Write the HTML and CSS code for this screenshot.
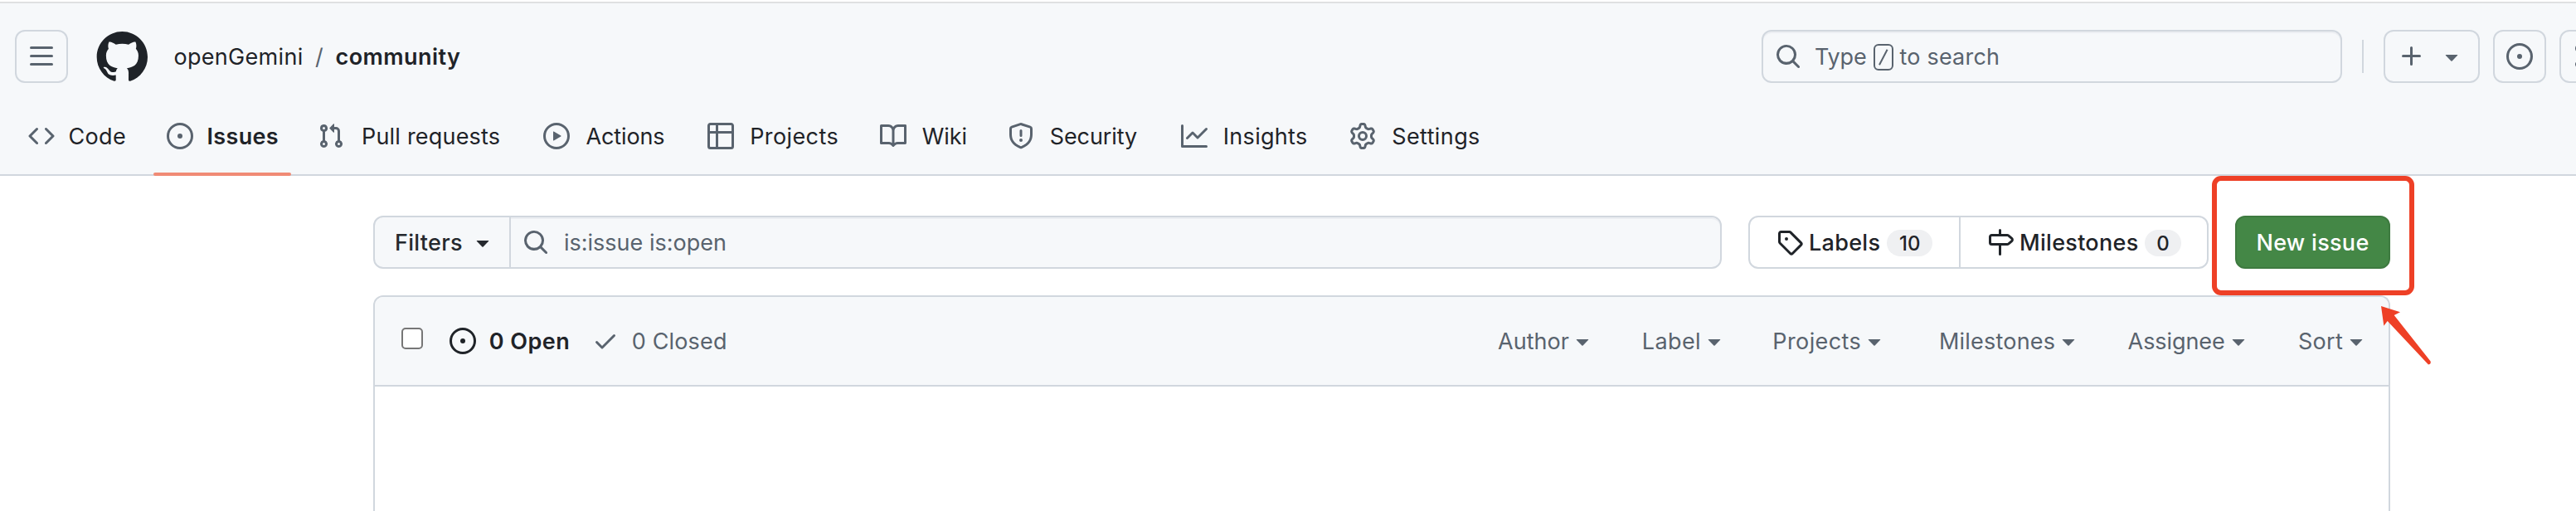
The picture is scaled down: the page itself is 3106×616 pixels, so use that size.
FILE: index.html
```html
<!DOCTYPE html>
<html lang="en">
<head>
<meta charset="utf-8">
<title>Issues · openGemini/community</title>
<link rel="stylesheet" href="styles.css">
</head>
<body>
<svg class="sprite" aria-hidden="true">
  <symbol id="bars" viewBox="0 0 16 16"><path d="M1 2.75A.75.75 0 0 1 1.75 2h12.5a.75.75 0 0 1 0 1.5H1.75A.75.75 0 0 1 1 2.75Zm0 5A.75.75 0 0 1 1.75 7h12.5a.75.75 0 0 1 0 1.5H1.75A.75.75 0 0 1 1 7.75ZM1.75 12h12.5a.75.75 0 0 1 0 1.5H1.75a.75.75 0 0 1 0-1.5Z"/></symbol>
  <symbol id="mark" viewBox="0 0 24 24"><path d="M12.5.75C6.146.75 1 5.896 1 12.25c0 5.089 3.292 9.387 7.863 10.91.575.101.79-.244.79-.546 0-.273-.014-1.178-.014-2.142-2.889.532-3.636-.704-3.866-1.35-.13-.331-.69-1.352-1.18-1.625-.402-.216-.977-.748-.014-.762.906-.014 1.553.834 1.769 1.179 1.035 1.74 2.688 1.25 3.349.948.1-.747.402-1.25.733-1.538-2.559-.287-5.232-1.279-5.232-5.678 0-1.25.445-2.285 1.178-3.09-.115-.288-.517-1.467.115-3.048 0 0 .963-.302 3.163 1.179.92-.259 1.897-.388 2.875-.388.977 0 1.955.13 2.875.388 2.2-1.495 3.162-1.179 3.162-1.179.633 1.581.23 2.76.115 3.048.733.805 1.179 1.825 1.179 3.09 0 4.413-2.688 5.39-5.247 5.678.417.36.776 1.05.776 2.128 0 1.538-.014 2.774-.014 3.162 0 .302.216.662.79.547C20.709 21.637 24 17.324 24 12.25 24 5.896 18.854.75 12.5.75Z"/></symbol>
  <symbol id="code" viewBox="0 0 16 16"><path d="m11.28 3.22 4.25 4.25a.75.75 0 0 1 0 1.06l-4.25 4.25a.749.749 0 0 1-1.275-.326.749.749 0 0 1 .215-.734L13.94 8l-3.72-3.72a.749.749 0 0 1 .326-1.275.749.749 0 0 1 .734.215Zm-6.56 0a.751.751 0 0 1 1.042.018.751.751 0 0 1 .018 1.042L2.06 8l3.72 3.72a.749.749 0 0 1-.326 1.275.749.749 0 0 1-.734-.215L.47 8.53a.75.75 0 0 1 0-1.06Z"/></symbol>
  <symbol id="issue" viewBox="0 0 16 16"><path d="M8 9.5a1.5 1.5 0 1 0 0-3 1.5 1.5 0 0 0 0 3Z"/><path d="M8 0a8 8 0 1 1 0 16A8 8 0 0 1 8 0ZM1.5 8a6.5 6.5 0 1 0 13 0 6.5 6.5 0 0 0-13 0Z"/></symbol>
  <symbol id="pull" viewBox="0 0 16 16"><path d="M1.5 3.25a2.25 2.25 0 1 1 3 2.122v5.256a2.251 2.251 0 1 1-1.5 0V5.372A2.25 2.25 0 0 1 1.5 3.25Zm5.677-.177L9.573.677A.25.25 0 0 1 10 .854V2.5h1A2.5 2.5 0 0 1 13.5 5v5.628a2.251 2.251 0 1 1-1.5 0V5a1 1 0 0 0-1-1h-1v1.646a.25.25 0 0 1-.427.177L7.177 3.427a.25.25 0 0 1 0-.354ZM3.75 2.5a.75.75 0 1 0 0 1.5.75.75 0 0 0 0-1.5Zm0 9.5a.75.75 0 1 0 0 1.5.75.75 0 0 0 0-1.5Zm8.25.75a.75.75 0 1 0 1.5 0 .75.75 0 0 0-1.5 0Z"/></symbol>
  <symbol id="play" viewBox="0 0 16 16"><path d="M8 0a8 8 0 1 1 0 16A8 8 0 0 1 8 0ZM1.5 8a6.5 6.5 0 1 0 13 0 6.5 6.5 0 0 0-13 0Zm4.879-2.773 4.264 2.559a.25.25 0 0 1 0 .428l-4.264 2.559A.25.25 0 0 1 6 10.559V5.442a.25.25 0 0 1 .379-.215Z"/></symbol>
  <symbol id="table" viewBox="0 0 16 16"><path d="M0 1.75C0 .784.784 0 1.75 0h12.5C15.216 0 16 .784 16 1.75v12.5A1.75 1.75 0 0 1 14.25 16H1.75A1.75 1.75 0 0 1 0 14.25ZM6.5 6.5v8h7.75a.25.25 0 0 0 .25-.25V6.5Zm8-1.5V1.75a.25.25 0 0 0-.25-.25H6.5V5Zm-13 1.5v7.75c0 .138.112.25.25.25H5v-8ZM5 5V1.5H1.75a.25.25 0 0 0-.25.25V5Z"/></symbol>
  <symbol id="book" viewBox="0 0 16 16"><path d="M0 1.75A.75.75 0 0 1 .75 1h4.253c1.227 0 2.317.59 3 1.501A3.743 3.743 0 0 1 11.006 1h4.245a.75.75 0 0 1 .75.75v10.5a.75.75 0 0 1-.75.75h-4.507a2.25 2.25 0 0 0-1.591.659l-.622.621a.75.75 0 0 1-1.06 0l-.622-.621A2.25 2.25 0 0 0 5.258 13H.75a.75.75 0 0 1-.75-.75Zm7.251 10.324.004-5.073-.002-2.253A2.25 2.25 0 0 0 5.003 2.5H1.5v9h3.757a3.75 3.75 0 0 1 1.994.574ZM8.755 4.75l-.004 7.322a3.752 3.752 0 0 1 1.992-.572H14.5v-9h-3.495a2.25 2.25 0 0 0-2.25 2.25Z"/></symbol>
  <symbol id="shield" viewBox="0 0 16 16"><path d="M7.467.133a1.748 1.748 0 0 1 1.066 0l5.25 1.68A1.75 1.75 0 0 1 15 3.48V7c0 1.566-.32 3.182-1.303 4.682-.983 1.498-2.585 2.813-5.032 3.855a1.697 1.697 0 0 1-1.33 0c-2.447-1.042-4.049-2.357-5.032-3.855C1.32 10.182 1 8.566 1 7V3.48a1.75 1.75 0 0 1 1.217-1.667Zm.61 1.429a.25.25 0 0 0-.153 0l-5.25 1.68a.25.25 0 0 0-.174.238V7c0 1.358.275 2.666 1.057 3.86.784 1.194 2.121 2.34 4.366 3.297a.196.196 0 0 0 .154 0c2.245-.956 3.582-2.104 4.366-3.298C13.225 9.666 13.5 8.36 13.5 7V3.48a.251.251 0 0 0-.174-.237l-5.25-1.68ZM8.75 4.75v3a.75.75 0 0 1-1.5 0v-3a.75.75 0 0 1 1.5 0ZM9 10.5a1 1 0 1 1-2 0 1 1 0 0 1 2 0Z"/></symbol>
  <symbol id="graph" viewBox="0 0 16 16"><path d="M1.5 1.75V13.5h13.75a.75.75 0 0 1 0 1.5H.75a.75.75 0 0 1-.75-.75V1.75a.75.75 0 0 1 1.5 0Zm14.28 2.53-5.25 5.25a.75.75 0 0 1-1.06 0L7 7.06 4.28 9.78a.751.751 0 0 1-1.042-.018.751.751 0 0 1-.018-1.042l3.25-3.25a.75.75 0 0 1 1.06 0L10 7.94l4.72-4.72a.751.751 0 0 1 1.042.018.751.751 0 0 1 .018 1.042Z"/></symbol>
  <symbol id="gear" viewBox="0 0 16 16"><path d="M8 0a8.2 8.2 0 0 1 .701.031C9.444.095 9.99.645 10.16 1.29l.288 1.107c.018.066.079.158.212.224.231.114.454.243.668.386.123.082.233.09.299.071l1.103-.303c.644-.176 1.392.021 1.82.63.27.385.506.792.704 1.218.315.675.111 1.422-.364 1.891l-.814.806c-.049.048-.098.147-.088.294.016.257.016.515 0 .772-.01.147.038.246.088.294l.814.806c.475.469.679 1.216.364 1.891a7.977 7.977 0 0 1-.704 1.217c-.428.61-1.176.807-1.82.63l-1.102-.302c-.067-.019-.177-.011-.3.071a5.909 5.909 0 0 1-.668.386c-.133.066-.194.158-.211.224l-.29 1.106c-.168.646-.715 1.196-1.458 1.26a8.006 8.006 0 0 1-1.402 0c-.743-.064-1.289-.614-1.458-1.26l-.289-1.106c-.018-.066-.079-.158-.212-.224a5.738 5.738 0 0 1-.668-.386c-.123-.082-.233-.09-.299-.071l-1.103.303c-.644.176-1.392-.021-1.82-.63a8.12 8.12 0 0 1-.704-1.218c-.315-.675-.111-1.422.363-1.891l.815-.806c.05-.048.098-.147.088-.294a6.214 6.214 0 0 1 0-.772c.01-.147-.038-.246-.088-.294l-.815-.806C.635 6.045.431 5.298.746 4.623a7.92 7.92 0 0 1 .704-1.217c.428-.61 1.176-.807 1.82-.63l1.102.302c.067.019.177.011.3-.071.214-.143.437-.272.668-.386.133-.066.194-.158.211-.224l.29-1.106C6.009.645 6.556.095 7.299.03 7.53.01 7.764 0 8 0Zm-.571 1.525c-.036.003-.108.036-.137.146l-.289 1.105c-.147.561-.549.967-.998 1.189-.173.086-.34.183-.5.29-.417.278-.97.423-1.529.27l-1.103-.303c-.109-.03-.175.016-.195.045-.22.312-.412.644-.573.99-.014.031-.021.11.059.19l.815.806c.411.406.562.957.53 1.456a4.709 4.709 0 0 0 0 .582c.032.499-.119 1.05-.53 1.456l-.815.806c-.081.08-.073.159-.059.19.162.346.353.677.573.989.02.03.085.076.195.046l1.102-.303c.56-.153 1.113-.008 1.53.27.161.107.328.204.501.29.447.222.85.629.997 1.189l.289 1.105c.029.109.101.143.137.146a6.6 6.6 0 0 0 1.142 0c.036-.003.108-.036.137-.146l.289-1.105c.147-.561.549-.967.998-1.189.173-.086.34-.183.5-.29.417-.278.97-.423 1.529-.27l1.103.303c.109.029.175-.016.195-.045.22-.313.411-.644.573-.99.014-.031.021-.11-.059-.19l-.815-.806c-.411-.406-.562-.957-.53-1.456a4.709 4.709 0 0 0 0-.582c-.032-.499.119-1.05.53-1.456l.815-.806c.081-.08.073-.159.059-.19a6.464 6.464 0 0 0-.573-.989c-.02-.03-.085-.076-.195-.046l-1.102.303c-.56.153-1.113.008-1.53-.27a4.44 4.44 0 0 0-.501-.29c-.447-.222-.85-.629-.997-1.189l-.289-1.105c-.029-.11-.101-.143-.137-.146a6.6 6.6 0 0 0-1.142 0ZM11 8a3 3 0 1 1-6 0 3 3 0 0 1 6 0ZM9.5 8a1.5 1.5 0 1 0-3.001.001A1.5 1.5 0 0 0 9.5 8Z"/></symbol>
  <symbol id="search" viewBox="0 0 16 16"><path d="M10.68 11.74a6 6 0 0 1-7.922-8.982 6 6 0 0 1 8.982 7.922l3.04 3.04a.749.749 0 0 1-.326 1.275.749.749 0 0 1-.734-.215ZM11.5 7a4.499 4.499 0 1 0-8.997 0A4.499 4.499 0 0 0 11.5 7Z"/></symbol>
  <symbol id="plus" viewBox="0 0 16 16"><path d="M7.75 2a.75.75 0 0 1 .75.75V7h4.25a.75.75 0 0 1 0 1.5H8.5v4.25a.75.75 0 0 1-1.5 0V8.5H2.75a.75.75 0 0 1 0-1.5H7V2.75A.75.75 0 0 1 7.75 2Z"/></symbol>
  <symbol id="caret" viewBox="0 0 16 16"><path d="m4.427 7.427 3.396 3.396a.25.25 0 0 0 .354 0l3.396-3.396A.25.25 0 0 0 11.396 7H4.604a.25.25 0 0 0-.177.427Z"/></symbol>
  <symbol id="tag" viewBox="0 0 16 16"><path d="M1 7.775V2.75C1 1.784 1.784 1 2.75 1h5.025c.464 0 .91.184 1.238.513l6.25 6.25a1.75 1.75 0 0 1 0 2.474l-5.026 5.026a1.75 1.75 0 0 1-2.474 0l-6.25-6.25A1.752 1.752 0 0 1 1 7.775Zm1.5 0c0 .066.026.13.073.177l6.25 6.25a.25.25 0 0 0 .354 0l5.025-5.025a.25.25 0 0 0 0-.354l-6.25-6.25a.25.25 0 0 0-.177-.073H2.75a.25.25 0 0 0-.25.25ZM6 5a1 1 0 1 1 0 2 1 1 0 0 1 0-2Z"/></symbol>
  <symbol id="milestone" viewBox="0 0 16 16"><path d="M7.75 0a.75.75 0 0 1 .75.75V3h3.634c.414 0 .814.147 1.13.414l2.07 1.75a1.75 1.75 0 0 1 0 2.672l-2.07 1.75a1.75 1.75 0 0 1-1.13.414H8.5v5.25a.75.75 0 0 1-1.5 0V10H2.75A1.75 1.75 0 0 1 1 8.25v-3.5C1 3.784 1.784 3 2.75 3H7V.75A.75.75 0 0 1 7.75 0Zm4.384 8.5a.25.25 0 0 0 .161-.06l2.07-1.75a.248.248 0 0 0 0-.38l-2.07-1.75a.25.25 0 0 0-.161-.06H2.75a.25.25 0 0 0-.25.25v3.5c0 .138.112.25.25.25h9.384Z"/></symbol>
  <symbol id="check" viewBox="0 0 16 16"><path d="M13.78 4.22a.75.75 0 0 1 0 1.06l-7.25 7.25a.75.75 0 0 1-1.06 0L2.22 9.28a.751.751 0 0 1 .018-1.042.751.751 0 0 1 1.042-.018L6 10.94l6.72-6.72a.75.75 0 0 1 1.06 0Z"/></symbol>
</svg>

<header class="header">
  <div class="topbar">
    <button class="box-btn menu-btn" aria-label="Menu"><svg class="icon"><use href="#bars"/></svg></button>
    <svg class="logo"><use href="#mark"/></svg>
    <div class="crumbs"><a class="owner">openGemini</a><span class="slash">/</span><a class="repo">community</a></div>
    <div class="search">
      <svg class="icon"><use href="#search"/></svg>
      <span class="type">Type</span><kbd class="key"><svg class="key-slash" viewBox="0 0 12 20"><path d="M1 19.3 10.6.7"/></svg></kbd><span class="to-search">to search</span>
    </div>
    <span class="rule"></span>
    <button class="box-btn create-btn" aria-label="Create"><svg class="icon"><use href="#plus"/></svg><svg class="icon"><use href="#caret"/></svg></button>
    <button class="box-btn issues-btn" aria-label="Your issues"><svg class="icon"><use href="#issue"/></svg></button>
    <div class="edge"><button class="box-btn" aria-label="Your pull requests"><svg class="icon"><use href="#pull"/></svg></button></div>
  </div>
  <nav class="tabs">
    <a class="tab near"><svg class="icon"><use href="#code"/></svg><span>Code</span></a>
    <a class="tab near active"><svg class="icon"><use href="#issue"/></svg><span>Issues</span></a>
    <a class="tab pulls"><svg class="icon"><use href="#pull"/></svg><span>Pull requests</span></a>
    <a class="tab actions tight"><svg class="icon"><use href="#play"/></svg><span>Actions</span></a>
    <a class="tab wide"><svg class="icon"><use href="#table"/></svg><span>Projects</span></a>
    <a class="tab tight"><svg class="icon"><use href="#book"/></svg><span>Wiki</span></a>
    <a class="tab tight"><svg class="icon"><use href="#shield"/></svg><span>Security</span></a>
    <a class="tab"><svg class="icon"><use href="#graph"/></svg><span>Insights</span></a>
    <a class="tab wide"><svg class="icon"><use href="#gear"/></svg><span>Settings</span></a>
  </nav>
</header>

<main class="main">
  <div class="toolbar">
    <div class="filter">
      <button class="filter-btn"><span>Filters</span><svg class="icon"><use href="#caret"/></svg></button>
      <div class="query"><svg class="icon"><use href="#search"/></svg><span>is:issue is:open</span></div>
    </div>
    <div class="subnav">
      <a class="sub labels"><svg class="icon"><use href="#tag"/></svg><span class="sub-text">Labels</span><span class="count">10</span></a>
      <a class="sub milestones"><svg class="icon"><use href="#milestone"/></svg><span class="sub-text">Milestones</span><span class="count">0</span></a>
    </div>
    <a class="new-issue">New issue</a>
  </div>

  <section class="list">
    <div class="list-head">
      <span class="checkbox"></span>
      <a class="state open"><svg class="icon"><use href="#issue"/></svg><span>0 Open</span></a>
      <a class="state closed"><svg class="icon"><use href="#check"/></svg><span>0 Closed</span></a>
      <div class="menus">
        <a class="m-author"><span>Author</span><svg class="icon"><use href="#caret"/></svg></a>
        <a class="m-label"><span>Label</span><svg class="icon"><use href="#caret"/></svg></a>
        <a class="m-projects"><span>Projects</span><svg class="icon"><use href="#caret"/></svg></a>
        <a class="m-milestones"><span>Milestones</span><svg class="icon"><use href="#caret"/></svg></a>
        <a class="m-assignee"><span>Assignee</span><svg class="icon"><use href="#caret"/></svg></a>
        <a class="m-sort"><span>Sort</span><svg class="icon"><use href="#caret"/></svg></a>
      </div>
    </div>
  </section>
</main>

<svg class="callout" viewBox="0 0 280 240" aria-hidden="true">
  <rect x="10" y="15" width="238" height="138" rx="8"/>
  <path d="M211 169 234 176.3 226.7 180 270.6 235.6Q271.6 239 268 239.6L218.7 187 214.3 192.7Z"/>
</svg>
</body>
</html>
```
FILE: styles.css
```css
*, *::before, *::after { box-sizing: border-box; }
body {
  margin: 0;
  height: 616px;
  overflow: hidden;
  position: relative;
  display: flex;
  flex-direction: column;
  background: #fff;
  color: #1f2328;
  font: 400 27px/32px Inter, "Liberation Sans", sans-serif;
  letter-spacing: .3px;
  white-space: nowrap;
}
button { font: inherit; letter-spacing: inherit; color: inherit; padding: 0; margin: 0; background: none; }
.sprite { position: absolute; width: 0; height: 0; }
.icon { width: 32px; height: 32px; flex: none; display: block; fill: currentColor; }

/* optical centring of labels beside icons */
.crumbs, .type, .to-search, .tab span, .filter-btn span, .query span,
.sub-text, .new-issue, .state span, .menus span { padding-top: 2px; }

.header {
  flex: none;
  height: 212px;
  background: #f6f8fa;
  border-bottom: 2px solid #d1d7de;
}
.header::before { content: ""; display: block; height: 4px; background: #fff; border-bottom: 2px solid #dfe0e1; }
.topbar { display: flex; align-items: center; height: 64px; margin-top: 32px; padding-left: 18px; }
.box-btn {
  display: flex; align-items: center; justify-content: center; flex: none;
  width: 64px; height: 64px;
  border: 2px solid #d1d7de; border-radius: 12px;
  color: #59636e;
}
.logo { width: 64px; height: 64px; flex: none; margin: 0 31.5px 0 32px; fill: #1f2328; }
.crumbs { display: flex; }
.owner { width: 170.5px; }
.slash { width: 24.5px; color: #59636e; }
.repo { font-weight: 600; letter-spacing: .45px; }
.search {
  display: flex; align-items: center; flex: none;
  width: 700px; height: 64px; margin-left: auto; padding-left: 14px;
  border: 2px solid #d1d7de; border-radius: 12px;
  box-shadow: inset 0 2px 0 #eceef2;
  color: #59636e;
}
.type { width: 71px; margin-left: 16px; letter-spacing: -.15px; }
.key {
  display: flex; align-items: center; justify-content: center;
  width: 24px; height: 32px; margin: 1px 7.5px 0 0;
  border: 2px solid #59636e; border-radius: 6px;
}
.key-slash { width: 12px; height: 20px; fill: none; stroke: currentColor; stroke-width: 2; }
.to-search { letter-spacing: .2px; }
.rule { flex: none; width: 2px; height: 40px; margin: 0 24px; background: #d1d7de; }
.create-btn { width: 116px; gap: 16px; }
.issues-btn { margin: 0 16px; }
.edge { flex: none; width: 20px; overflow: hidden; }

.tabs {
  display: grid;
  grid-template-columns: 167px 182px 272px 198px 208px 154px 209px 203px 190px;
  height: 96px; margin-top: 16px; padding-left: 18px;
}
.tab { display: flex; align-items: center; gap: 18.8px; height: 96px; padding-left: 16px; }
.tab .icon { color: #59636e; }
.near { gap: 16.6px; }
.pulls { gap: 21px; letter-spacing: .2px; }
.actions { gap: 19.5px; }
.tight { letter-spacing: -.12px; }
.wide { gap: 19.2px; letter-spacing: .4px; }
.active { position: relative; font-weight: 600; }
.active::after {
  content: ""; position: absolute; left: 0; bottom: 0;
  width: 166px; height: 4px; border-radius: 2px; background: #f08b75;
}

.main { width: 2432px; margin: 48px 0 0 450px; display: flex; flex-direction: column; flex: 1; }
.toolbar { display: flex; height: 64px; flex: none; font-weight: 500; }
.filter {
  display: flex; width: 1626px; height: 64px;
  border: 2px solid #d1d7de; border-radius: 12px; overflow: hidden;
  background: #f6f8fa;
}
.filter-btn {
  display: flex; align-items: center; width: 164px; padding-left: 24px;
  border: 0; border-right: 2px solid #d1d7de;
  color: #25292e; letter-spacing: .3px;
}
.filter-btn .icon { margin-left: auto; margin-right: 16px; }
.query {
  display: flex; align-items: center; flex: 1; gap: 18px; padding-left: 14px;
  border-radius: 0 10px 10px 0; box-shadow: inset 0 2px 0 #eceef2;
  color: #59636e; font-weight: 400; letter-spacing: 0;
}
.subnav {
  display: flex; width: 555px; margin-left: 32px;
  border: 2px solid #d1d7de; border-radius: 12px;
}
.sub { display: flex; align-items: center; padding-left: 32px; }
.labels { width: 254px; border-right: 2px solid #d1d7de; }
.sub-text { margin-left: 7px; }
.labels .sub-text { width: 94px; letter-spacing: .3px; }
.milestones .sub-text { width: 151px; }
.count {
  height: 32px; padding: 0 15px; border-radius: 16px; margin-top: 2px;
  background: #eff0f2; font-size: 24px; line-height: 34px; text-align: center; letter-spacing: 0;
}
.labels .count { width: 55px; }
.milestones .count { width: 44px; padding: 0; }
.new-issue {
  display: flex; align-items: center; justify-content: center;
  width: 187px; margin-left: auto;
  background: #448746; border: 2px solid #3e7a40; border-radius: 12px; color: #fff;
}

.list {
  flex: 1; margin-top: 32px;
  border: 2px solid #d1d7de; border-bottom: 0; border-radius: 12px 12px 0 0;
}
.list-head {
  display: flex; align-items: center; height: 108px; padding-left: 32px;
  background: #f6f8fa; border-bottom: 2px solid #d1d7de; border-radius: 10px 10px 0 0;
}
.checkbox {
  width: 26px; height: 26px; margin: 0 32px 6px 0;
  background: #fff; border: 2px solid #767676; border-radius: 5px;
}
.state, .menus a { display: flex; align-items: center; }
.state span { margin-left: 15.8px; }
.open { width: 172px; font-weight: 600; letter-spacing: .45px; }
.closed { letter-spacing: .15px; }
.closed, .menus { color: #59636e; }
.menus {
  display: grid; margin-left: auto;
  grid-template-columns: 173.7px 157.6px 200.7px 227.6px 205.4px 109px;
}
.menus .icon { margin-left: auto; }
.m-author { width: 118px; letter-spacing: .02px; }
.m-label { width: 101px; letter-spacing: .4px; }
.m-projects { width: 136.7px; letter-spacing: .4px; }
.m-milestones { width: 170.5px; letter-spacing: .2px; }
.m-assignee { width: 148.4px; letter-spacing: -.07px; }
.m-sort { width: 85px; }

.callout { position: absolute; left: 2660px; top: 200px; width: 280px; height: 240px; fill: #ee4026; }
.callout rect { fill: none; stroke: #ee4026; stroke-width: 6; }
```
